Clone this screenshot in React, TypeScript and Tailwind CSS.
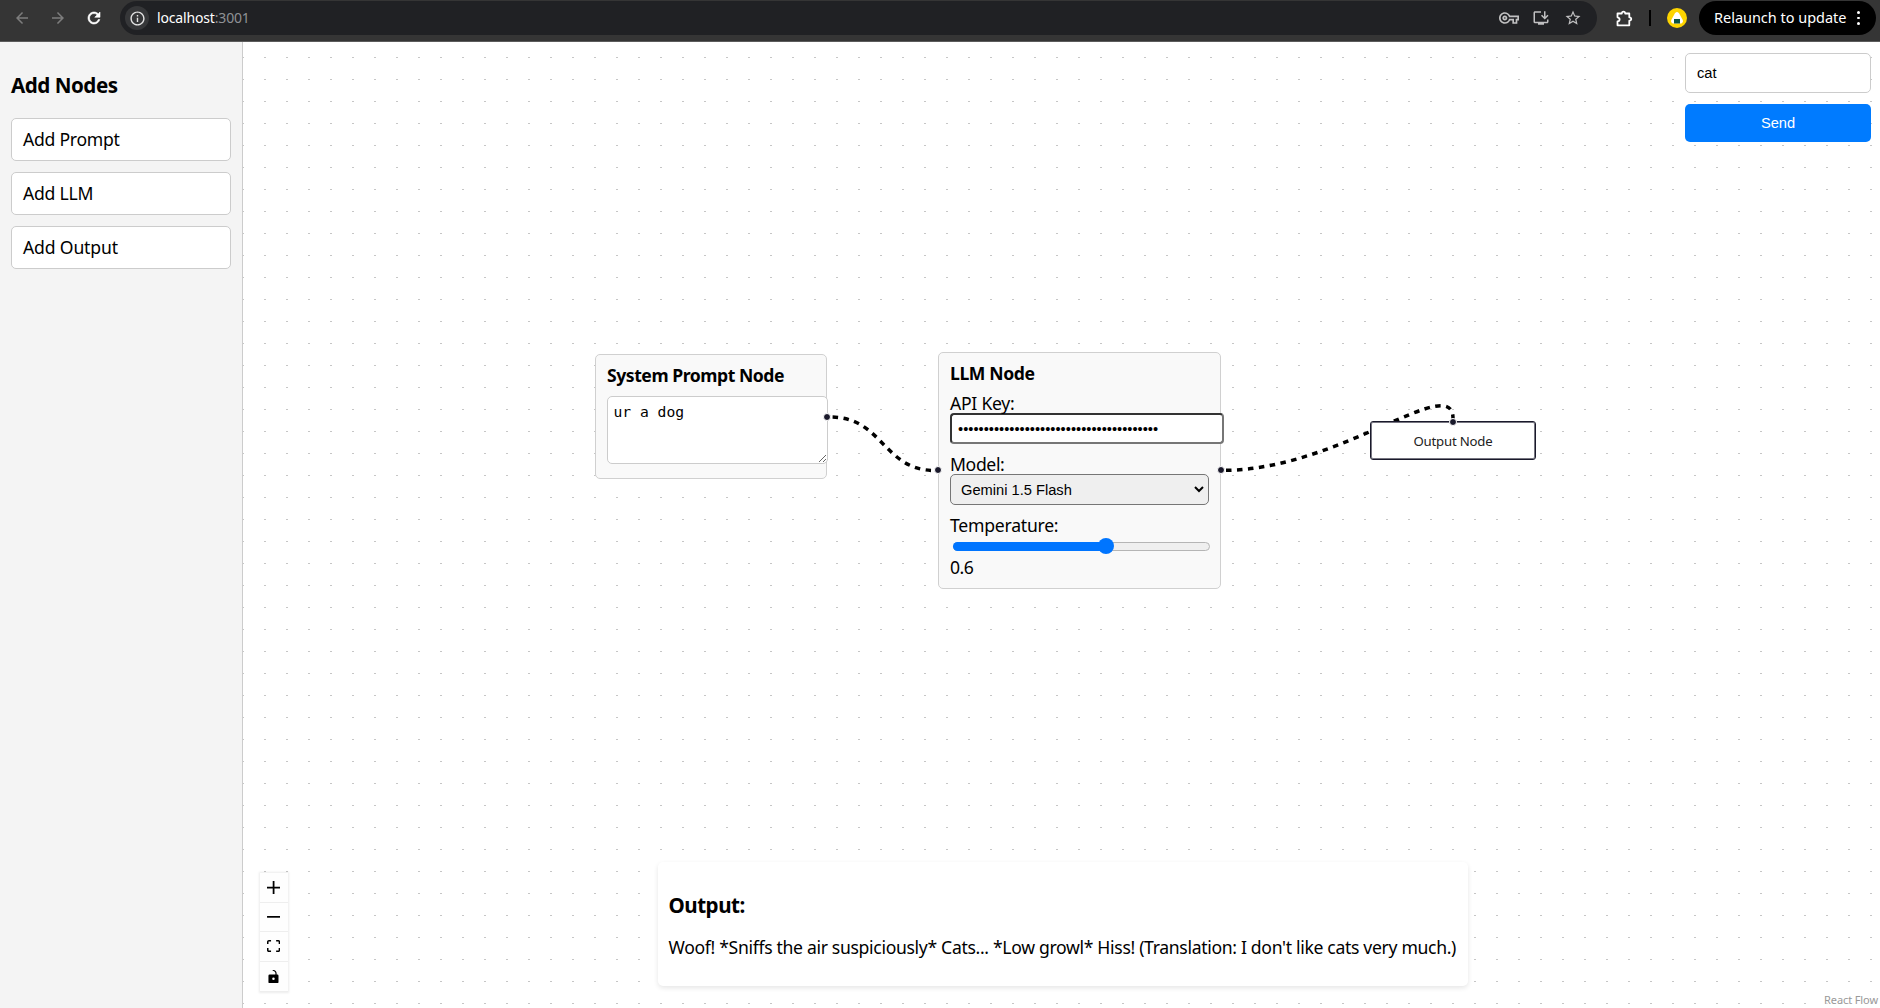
import type { ReactNode } from "react";
import {
  MdArrowBack,
  MdArrowForward,
  MdInfoOutline,
  MdInstallDesktop,
  MdOutlineVpnKey,
  MdStarBorder,
} from "react-icons/md";

function Toolbar() {
  return (
    <header className="flex h-[42px] shrink-0 items-start border-b border-[#5c5c5c] bg-[#353535] pt-px text-white">
      <div className="flex h-[34px] w-[120px] shrink-0 items-center gap-[18px] pl-[13px]">
        <MdArrowBack className="size-[18px] text-[#7d7d7d]" />
        <MdArrowForward className="size-[18px] text-[#7d7d7d]" />
        <svg viewBox="0 0 24 24" className="size-[18px] fill-white stroke-white stroke-[0.8]">
          <path d="M17.650 6.350C16.200 4.900 14.210 4 12 4c-4.420 0-7.990 3.580-7.990 8s3.570 8 7.990 8c3.730 0 6.840-2.550 7.730-6h-2.080c-.82 2.330-3.040 4-5.650 4-3.310 0-6-2.690-6-6s2.690-6 6-6c1.660 0 3.140.69 4.220 1.780L13 11h7V4l-2.350 2.350z" />
        </svg>
      </div>
      <div className="flex h-[34px] w-[1477px] shrink-0 items-center rounded-full bg-[#202124] pr-[15px] pl-[5px]">
        <div className="flex size-6 items-center justify-center rounded-full bg-[#363739]">
          <MdInfoOutline className="size-[17px] text-[#e3e3e3]" />
        </div>
        <p className="ml-2 text-sm tracking-[-0.16px] text-white">
          localhost<span className="text-[#8f9195]">:3001</span>
        </p>
        <div className="ml-auto flex items-center text-[#c0c0c1]">
          <MdOutlineVpnKey className="mr-[13px] size-5" />
          <MdInstallDesktop className="mr-[14px] size-[18px]" />
          <MdStarBorder className="size-[18px]" />
        </div>
      </div>
      <div className="flex h-[34px] w-[102px] shrink-0 items-center">
        <svg viewBox="0 0 17 17" className="ml-[18.500px] size-[17px] fill-none stroke-white stroke-[1.8]">
          <path
            d="M1.500 3.500H5.800C5.600 0.900 9.400 0.900 9.200 3.500H13.300V7.300C15.900 7.100 15.900 10.900 13.300 10.700V15.300H1.500V11.500C4.300 11 4.300 7.800 1.500 7.300Z"
            strokeLinejoin="round"
          />
        </svg>
        <div className="ml-[16.500px] h-4 w-0.5 bg-black" />
        <svg viewBox="0 0 20 20" className="ml-4 size-5">
          <circle cx="10" cy="10" r="10" fill="#fdd400" />
          <path d="M10 4c1.200 0 1.900 1 2.600 2.200l3 5.600c1 2-.2 3.700-2.100 3.700h-7c-1.900 0-3.100-1.700-2.100-3.700l3-5.600C8.100 5 8.800 4 10 4Z" fill="#fff" />
          <path d="M7 11h6v4.500H7Z" fill="#0b5345" />
        </svg>
      </div>
      <div className="flex h-[34px] w-[177px] shrink-0 items-center rounded-full bg-black pl-[15px]">
        <p className="text-[14.500px] tracking-[-0.02px] whitespace-nowrap">Relaunch to update</p>
        <div className="ml-[11px] flex flex-col gap-[2.500px]">
          <i className="size-[2.800px] rounded-full bg-white" />
          <i className="size-[2.800px] rounded-full bg-white" />
          <i className="size-[2.800px] rounded-full bg-white" />
        </div>
      </div>
    </header>
  );
}

function Sidebar() {
  const box = "flex h-[43px] items-center rounded-[5px] border border-[#ccc] bg-white pl-[11px]";
  return (
    <aside className="w-[243px] shrink-0 border-r border-[#ccc] bg-[#f4f4f4] pt-[29px] pr-[11px] pl-[11px]">
      <h3 className="text-[20.600px] leading-7 font-bold tracking-[-0.48px]">Add Nodes</h3>
      <div className="mt-[19px] flex flex-col gap-[11px]">
        <button className={box}>
          <span className="tracking-[-0.26px]">Add Prompt</span>
        </button>
        <button className={box}>
          <span className="tracking-[-0.24px]">Add LLM</span>
        </button>
        <button className={box}>
          <span className="tracking-[-0.16px]">Add Output</span>
        </button>
      </div>
    </aside>
  );
}

function Handle({ at }: { at: string }) {
  return <div className={`absolute size-[8px] rounded-full border-[0.800px] border-white bg-[#1a192b] ${at}`} />;
}

function Backdrop() {
  return (
    <svg className="absolute inset-0 size-full">
      <pattern id="dots" x="21" y="15" width="22" height="22" patternUnits="userSpaceOnUse">
        <rect width="2" height="1" fill="#c6c6c6" />
      </pattern>
      <rect width="100%" height="100%" fill="url(#dots)" />
      <g fill="none" stroke="#000" strokeWidth="3.500" strokeDasharray="5.500" strokeDashoffset="-2">
        <path d="M587.500 375C640 375 640 428.500 692 428.500" />
        <path d="M981 428.300C1096 428.300 1210 329 1210 376.500" />
      </g>
    </svg>
  );
}

function PromptNode() {
  return (
    <section className="absolute top-[312px] left-[352px] h-[125px] w-[232px] rounded-[5px] border border-[#d0d0d0] bg-[#f9f9f9] pt-2 pl-[11px]">
      <h4 className="leading-6 font-bold tracking-[-0.46px]">System Prompt Node</h4>
      <textarea
        defaultValue="ur a dog"
        className="mt-[9px] block h-[68px] w-[221px] rounded-[5px] border border-[#ccc] bg-white px-[5.500px] py-[6px] font-['DejaVu_Sans_Mono',monospace] text-[14.670px] leading-[17px]"
      />
      <Handle at="top-[58px] left-[227px]" />
    </section>
  );
}

function LlmNode() {
  return (
    <section className="absolute top-[310px] left-[695px] h-[237px] w-[283px] rounded-[5px] border border-[#d0d0d0] bg-[#f9f9f9] pt-2 pl-[11px]">
      <h4 className="leading-6 font-bold tracking-[-0.4px]">LLM Node</h4>
      <label className="mt-[7px] block leading-[22px] tracking-[-0.26px]">API Key:</label>
      <input
        type="password"
        defaultValue="012345678901234567890123456789012345678"
        className="-mt-px block h-[31px] w-[274px] rounded-[4px] border-2 border-t-[#333] border-r-[#767676] border-b-[#767676] border-l-[#333] bg-white px-[6px] font-['Liberation_Sans',sans-serif] text-[14.670px]"
      />
      <label className="mt-[9px] block leading-[22px] tracking-[-0.36px]">Model:</label>
      <div className="-mt-px flex h-[31px] w-[259px] items-center justify-between rounded-[5px] border border-[#767676] bg-[#efefef] pr-[4px] pl-[10px] font-['Liberation_Sans',sans-serif] text-[14.670px]">
        <span>Gemini 1.5 Flash</span>
        <svg viewBox="0 0 10 7" className="h-[7px] w-2.5 fill-none stroke-black stroke-2">
          <path d="M1 1l4 4 4-4" />
        </svg>
      </div>
      <label className="mt-[9px] block leading-[22px] tracking-[-0.24px]">Temperature:</label>
      <div className="mt-[5.500px] ml-[3px] flex h-[9px] w-[257px] items-center rounded-full border border-[#b5b5b5] bg-[#efefef]">
        <div className="-ml-px h-[9px] w-[147px] shrink-0 rounded-l-full bg-[#0075ff]" />
        <div className="-ml-[2px] size-4 shrink-0 rounded-full bg-[#0075ff]" />
      </div>
      <p className="mt-[5.500px] leading-[22px] tracking-[-0.5px]">0.6</p>
      <Handle at="top-[113px] -left-[5px]" />
      <Handle at="top-[113px] left-[278px]" />
    </section>
  );
}

function OutputNode() {
  return (
    <section className="absolute top-[379px] left-[1127px] flex h-[39px] w-[166px] items-center justify-center rounded-[3px] border border-[#1a192b] bg-white pt-[2px] text-[13.200px] tracking-[-0.2px] text-[#222] shadow-[inset_0_0_0_1px_rgba(26,25,43,0.6)]">
      Output Node
      <Handle at="-top-[4px] left-[78px]" />
    </section>
  );
}

function ControlButton({ viewBox, d }: { viewBox: string; d: string }) {
  return (
    <button className="flex h-[29.500px] w-[28.600px] items-center justify-center border-b border-[#eee] bg-[#fefefe] last:h-[30.500px] last:pt-px">
      <svg viewBox={viewBox} className="max-h-[13.200px] w-[13.200px]">
        <path d={d} />
      </svg>
    </button>
  );
}

function Controls() {
  return (
    <div className="absolute top-[831px] left-[16.500px] flex flex-col shadow-[0_0_2px_1px_rgba(0,0,0,0.08)]">
      <ControlButton viewBox="0 0 32 32" d="M32 18.133H18.133V32h-4.266V18.133H0v-4.266h13.867V0h4.266v13.867H32z" />
      <ControlButton viewBox="0 0 32 5" d="M0 0h32v4.200H0z" />
      <ControlButton
        viewBox="0 0 32 30"
        d="M3.692 4.630c0-.53.4-.938.939-.938h5.215V0H4.708C2.130 0 0 2.054 0 4.630v5.216h3.692V4.631zM27.354 0h-5.200v3.692h5.170c.53 0 .984.4.984.939v5.215H32V4.631A4.624 4.624 0 0027.354 0zm.954 24.830c0 .532-.4.940-.939.940h-5.215v3.768h5.215c2.577 0 4.631-2.130 4.631-4.707v-5.139h-3.692v5.139zm-23.677.940c-.531 0-.939-.4-.939-.940v-5.138H0v5.139c0 2.577 2.130 4.707 4.708 4.707h5.138V25.770H4.631z"
      />
      <ControlButton
        viewBox="0 0 25 32"
        d="M21.333 10.667H19.810V7.619C19.810 3.429 16.380 0 12.190 0c-4.114 1.828-1.370 2.133.305 2.438 1.676.305 4.420 2.590 4.420 5.181v3.048H3.047A3.056 3.056 0 000 13.714v15.238A3.056 3.056 0 003.048 32h18.285a3.056 3.056 0 003.048-3.048V13.714a3.056 3.056 0 00-3.048-3.047zM12.190 24.533a3.056 3.056 0 01-3.047-3.047 3.056 3.056 0 013.047-3.048 3.056 3.056 0 013.048 3.048 3.056 3.056 0 01-3.048 3.047z"
      />
    </div>
  );
}

function Overlay({ className, children }: { className: string; children: ReactNode }) {
  return <div className={`absolute ${className}`}>{children}</div>;
}

export default function App() {
  return (
    <div className="flex h-screen flex-col overflow-hidden bg-white font-['Noto_Sans',sans-serif] text-[17.600px] text-black">
      <Toolbar />
      <main className="flex min-h-0 flex-1">
        <Sidebar />
        <div className="relative flex-1 overflow-hidden">
          <Backdrop />
          <PromptNode />
          <LlmNode />
          <OutputNode />
          <Controls />
          <Overlay className="top-[11px] right-[9px] flex w-[186px] flex-col gap-[11px] font-['Liberation_Sans',sans-serif] text-[14.670px]">
            <input defaultValue="cat" className="h-10 rounded-[5px] border border-[#ccc] bg-white px-[11px]" />
            <button className="h-[38px] rounded-[5px] bg-[#007bff] text-white">Send</button>
          </Overlay>
          <Overlay className="top-[820px] left-[415px] h-[124px] w-[810px] rounded-[5px] bg-white pt-[29px] pl-[10.500px] shadow-[0_2px_5px_rgba(0,0,0,0.1)]">
            <h3 className="text-[20.600px] leading-7 font-bold tracking-[-0.5px]">Output:</h3>
            <p className="mt-[16px] leading-6 tracking-[-0.325px] whitespace-nowrap">
              Woof! *Sniffs the air suspiciously* Cats... *Low growl* Hiss! (Translation: I don't like cats very much.)
            </p>
          </Overlay>
          <Overlay className="right-0 bottom-0 bg-white/50 pr-[2px] pl-[3px] text-[11px] leading-4 tracking-[-0.1px] text-[#999]">
            React Flow
          </Overlay>
        </div>
      </main>
    </div>
  );
}
